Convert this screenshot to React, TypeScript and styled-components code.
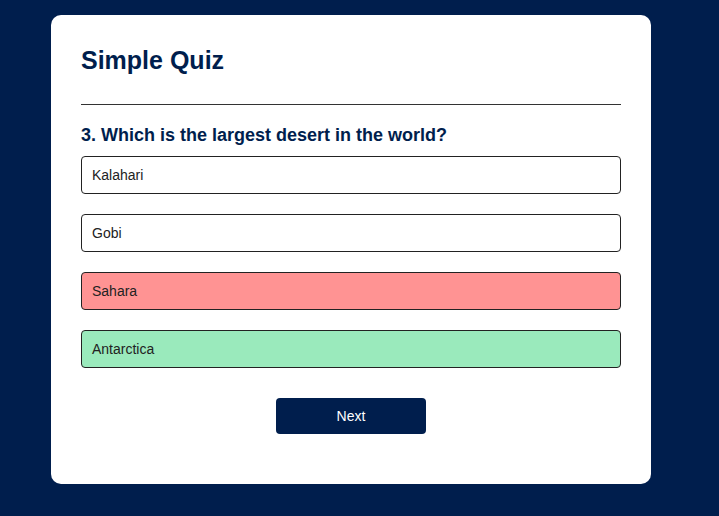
import React from "react";
import styled, { createGlobalStyle } from "styled-components";

const Global = createGlobalStyle`
  * { box-sizing: border-box; margin: 0; padding: 0; }
  html, body { background: #001e4d; }
  body { font-family: "Liberation Sans", Arial, sans-serif; padding: 15px 0 0 51px; }
`;

const Card = styled.div`
  background: #fff;
  width: 600px;
  border-radius: 10px;
  padding: 30px;
`;

const Title = styled.h1`
  font-size: 25px;
  color: #001e4d;
  font-weight: 700;
  border-bottom: 1px solid #333;
  padding-bottom: 28px;
  line-height: 31px;
`;

const Quiz = styled.div`
  padding: 20px 0;
  display: flex;
  flex-direction: column;
`;

const Question = styled.h2`
  font-size: 18px;
  line-height: 21px;
  color: #001e4d;
  font-weight: 700;
  margin-bottom: 10px;
`;

type State = "none" | "correct" | "incorrect";

const Option = styled.button<{ $state: State }>`
  font-family: "Liberation Sans", Arial, sans-serif;
  font-size: 14px;
  line-height: 16px;
  color: #222;
  width: 100%;
  text-align: left;
  border: 1px solid #222;
  border-radius: 4px;
  padding: 10px;
  margin-bottom: 20px;
  background: ${(p) =>
    p.$state === "correct" ? "#9aeabc" : p.$state === "incorrect" ? "#ff9393" : "#fff"};
`;

const Next = styled.button`
  font-family: "Liberation Sans", Arial, sans-serif;
  font-size: 14px;
  line-height: 16px;
  background: #001e4d;
  color: #fff;
  width: 150px;
  border: 0;
  padding: 10px;
  margin-top: 10px;
  border-radius: 4px;
  align-self: center;
`;

const options: { text: string; state: State }[] = [
  { text: "Kalahari", state: "none" },
  { text: "Gobi", state: "none" },
  { text: "Sahara", state: "incorrect" },
  { text: "Antarctica", state: "correct" },
];

export default function App() {
  return (
    <>
      <Global />
      <Card>
        <Title>Simple Quiz</Title>
        <Quiz>
          <Question>3. Which is the largest desert in the world?</Question>
          {options.map((o) => (
            <Option key={o.text} $state={o.state}>
              {o.text}
            </Option>
          ))}
          <Next>Next</Next>
        </Quiz>
      </Card>
    </>
  );
}
